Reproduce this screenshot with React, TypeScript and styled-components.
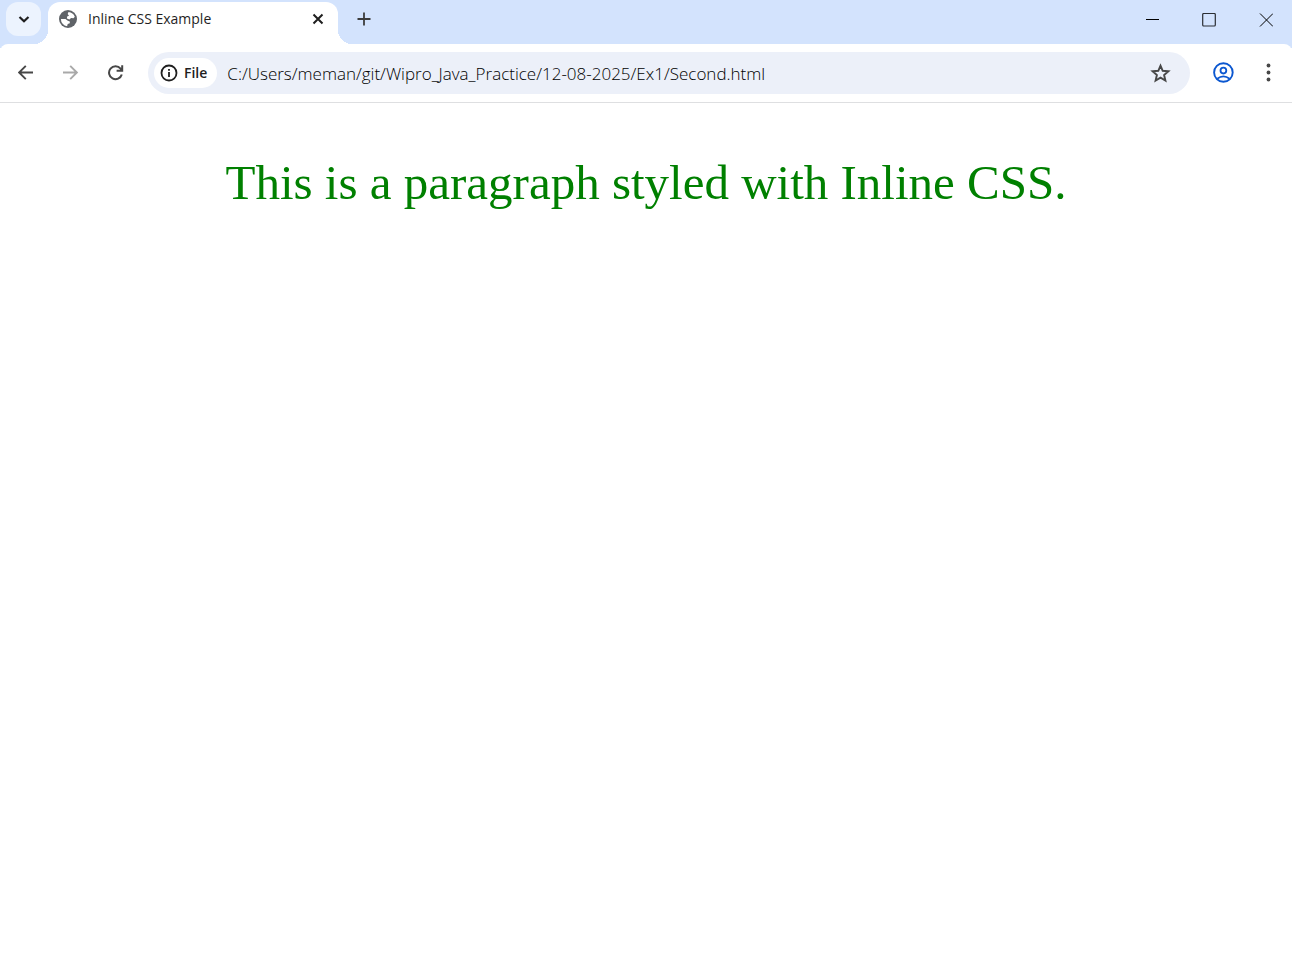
import React from "react";
import styled, { createGlobalStyle } from "styled-components";

const GlobalStyle = createGlobalStyle`
  *, *::before, *::after { box-sizing: border-box; }
  body { margin: 0; background: #ffffff; }
`;

const uiFont = `"Open Sans", "Noto Sans", sans-serif`;

const Browser = styled.div`
  display: flex;
  flex-direction: column;
  min-height: 100vh;
  font-family: ${uiFont};
  color: #1f1f1f;
`;

const TabStrip = styled.header`
  display: flex;
  align-items: flex-start;
  height: 48px;
  margin-bottom: -4px;
  padding-left: 6px;
  background: #d3e3fd;
`;

const PlainButton = styled.button`
  display: flex;
  align-items: center;
  justify-content: center;
  padding: 0;
  border: 0;
  background: none;
  color: inherit;
  font: inherit;
`;

const TabSearchButton = styled(PlainButton)`
  width: 35px;
  height: 34px;
  margin-top: 2px;
  border-radius: 12px;
  background: #ecf3fe;
`;

const Tab = styled.div`
  position: relative;
  display: flex;
  align-items: center;
  width: 290px;
  height: 42px;
  margin: 2px 0 0 7px;
  padding: 0 12px 8px 10px;
  border-radius: 12px 12px 0 0;
  background: #ffffff;

  &::before,
  &::after {
    content: "";
    position: absolute;
    bottom: 0;
    width: 14px;
    height: 14px;
  }
  &::before {
    right: 100%;
    background: radial-gradient(circle at 0 0, transparent 14px, #ffffff 14px);
  }
  &::after {
    left: 100%;
    background: radial-gradient(circle at 100% 0, transparent 14px, #ffffff 14px);
  }
`;

const TabTitle = styled.span`
  flex: 1;
  margin-left: 10px;
  font-size: 14px;
  line-height: 20px;
  white-space: nowrap;
`;

const TabClose = styled(PlainButton)`
  width: 16px;
  height: 16px;
`;

const NewTabButton = styled(PlainButton)`
  width: 32px;
  height: 34px;
  margin: 2px 0 0 10px;
  color: #3c3c3c;
`;

const WindowControls = styled.div`
  display: flex;
  gap: 5px;
  margin-left: auto;
  color: #000000;
`;

const WindowButton = styled(PlainButton)`
  width: 52px;
  height: 40px;
`;

const Toolbar = styled.nav`
  display: flex;
  align-items: center;
  gap: 5px;
  height: 59px;
  padding: 0 4px 0 6px;
  border-bottom: 1px solid #dedfe1;
  border-radius: 8px 8px 0 0;
  background: #ffffff;
`;

const ToolButton = styled(PlainButton)<{ $color?: string }>`
  width: 40px;
  height: 40px;
  color: ${(p) => p.$color ?? "#474747"};
`;

const AddressBar = styled.div`
  display: flex;
  flex: 1;
  align-items: center;
  height: 42px;
  margin: 0 8px 0 7px;
  padding: 0 18px 0 6px;
  border-radius: 21px;
  background: #ecf0f9;
`;

const SiteChip = styled(PlainButton)`
  gap: 6px;
  height: 30px;
  padding: 0 10px 0 6px;
  border-radius: 15px;
  background: #ffffff;
  font-size: 14px;
  line-height: 20px;
  font-weight: 600;
`;

const AddressInput = styled.input`
  flex: 1;
  min-width: 0;
  height: 30px;
  margin-left: 10px;
  padding: 0;
  border: 0;
  outline: 0;
  background: none;
  color: #000000;
  font-family: ${uiFont};
  font-size: 17px;
  font-weight: 300;
`;

const StarButton = styled(PlainButton)`
  color: #474747;
`;

const Page = styled.main`
  flex: 1;
  padding: 50px 10px;
`;

const Paragraph = styled.p`
  margin: 0;
  color: #008000;
  font-family: "Liberation Serif", "Times New Roman", serif;
  font-size: 49px;
  line-height: 60px;
  text-align: center;
`;

const Icon = ({ size, children }: { size: number; children: React.ReactNode }) => (
  <svg width={size} height={size} viewBox={`0 0 ${size} ${size}`} fill="none" stroke="currentColor" aria-hidden="true">
    {children}
  </svg>
);

const GlobeIcon = () => (
  <Icon size={20}>
    <circle cx="10" cy="10" r="9" fill="#5f6368" stroke="none" />
    <g fill="#ffffff" stroke="none">
      <path d="M10.500 3c3 .2 5.300 2 6.300 4.700L15.500 9.300l-2.500-.2-1.500 1.300-2.600-.8.200-2 1.900-.9-1.300-1.700z" />
      <path d="M2.900 10h4.600l2.300 1.700 2 .9v1.700l-2.100.8-.6 2.100A7.200 7.200 0 0 1 2.900 10z" />
    </g>
  </Icon>
);

export default function App() {
  return (
    <Browser>
      <GlobalStyle />
      <TabStrip>
        <TabSearchButton aria-label="Search tabs">
          <Icon size={12}>
            <path d="M1.500 4l4.500 4.300L10.500 4" strokeWidth="2.200" />
          </Icon>
        </TabSearchButton>
        <Tab>
          <GlobeIcon />
          <TabTitle>Inline CSS Example</TabTitle>
          <TabClose aria-label="Close tab">
            <Icon size={12}>
              <path d="M1.500 1.500l9 9M10.500 1.500l-9 9" strokeWidth="2" />
            </Icon>
          </TabClose>
        </Tab>
        <NewTabButton aria-label="New tab">
          <Icon size={14}>
            <path d="M7 .5v13M.5 7h13" strokeWidth="1.800" />
          </Icon>
        </NewTabButton>
        <WindowControls>
          <WindowButton aria-label="Minimize">
            <Icon size={14}>
              <path d="M1 6.500h13" />
            </Icon>
          </WindowButton>
          <WindowButton aria-label="Maximize">
            <Icon size={14}>
              <rect x=".7" y=".5" width="12.600" height="12.500" rx="1" strokeOpacity=".8" strokeWidth="1.200" />
            </Icon>
          </WindowButton>
          <WindowButton aria-label="Close">
            <Icon size={14}>
              <path d="M1 .5l13 13M14 .5l-13 13" />
            </Icon>
          </WindowButton>
        </WindowControls>
      </TabStrip>
      <Toolbar>
        <ToolButton aria-label="Back">
          <Icon size={16}>
            <path d="M15 7.500H1.500M7.800 .800L1.100 7.500l6.700 6.700" strokeWidth="1.900" />
          </Icon>
        </ToolButton>
        <ToolButton aria-label="Forward" $color="#a9a9a9" disabled>
          <Icon size={16}>
            <path d="M0 7.500H13.500M7.200 .800L13.900 7.500l-6.700 6.700" strokeWidth="1.900" />
          </Icon>
        </ToolButton>
        <ToolButton aria-label="Reload">
          <Icon size={16}>
            <path d="M13.800 9.500A6.500 6.500 0 1 1 12.600 3.600L13.800 5.200M14.200 .3v5.500H8.600" strokeWidth="2" />
          </Icon>
        </ToolButton>
        <AddressBar>
          <SiteChip>
            <Icon size={18}>
              <circle cx="9" cy="9" r="7.500" strokeWidth="1.800" />
              <path d="M9 8v5M9 5v1.800" strokeWidth="1.800" />
            </Icon>
            File
          </SiteChip>
          <AddressInput
            aria-label="Address"
            spellCheck={false}
            defaultValue="C:/Users/meman/git/Wipro_Java_Practice/12-08-2025/Ex1/Second.html"
          />
          <StarButton aria-label="Bookmark this page">
            <Icon size={22}>
              <path
                d="M10.500 3.600l2.200 5.200 5.700.5-4.300 3.700 1.300 5.600L10.500 15.600l-4.900 3 1.300-5.600-4.300-3.700 5.700-.5z"
                strokeWidth="1.900"
              />
            </Icon>
          </StarButton>
        </AddressBar>
        <ToolButton aria-label="Profile" $color="#0b57d0">
          <Icon size={22}>
            <circle cx="11.400" cy="10.500" r="9.300" strokeWidth="1.900" />
            <circle cx="11.400" cy="8.600" r="2.900" strokeWidth="1.800" />
            <path d="M5.200 16.800c3.800-3 8.600-3 12.400 0" strokeWidth="1.800" />
          </Icon>
        </ToolButton>
        <ToolButton aria-label="Menu">
          <Icon size={20}>
            <g fill="currentColor" stroke="none">
              <circle cx="10.500" cy="2.500" r="1.900" />
              <circle cx="10.500" cy="9.500" r="1.900" />
              <circle cx="10.500" cy="16.500" r="1.900" />
            </g>
          </Icon>
        </ToolButton>
      </Toolbar>
      <Page>
        <Paragraph>This is a paragraph styled with Inline CSS.</Paragraph>
      </Page>
    </Browser>
  );
}
